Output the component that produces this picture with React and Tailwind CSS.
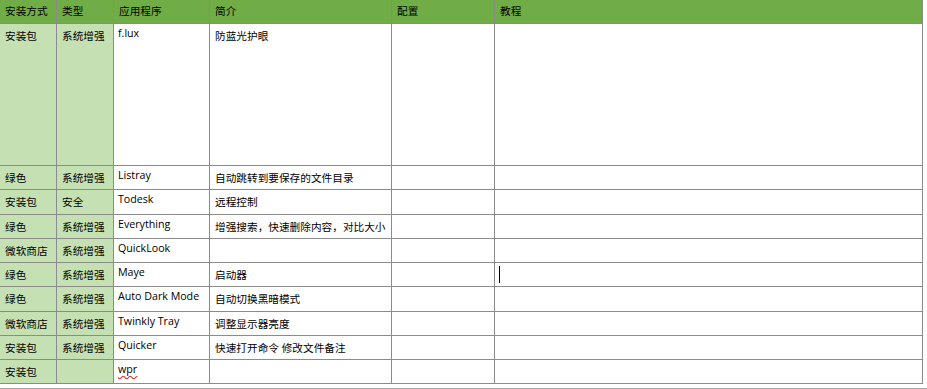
import React from "react";

const rows = [
  { h: "h-[141px]", install: "安装包", type: "系统增强", app: "f.lux", desc: "防蓝光护眼" },
  { h: "h-[23px]", install: "绿色", type: "系统增强", app: "Listray", desc: "自动跳转到要保存的文件目录" },
  { h: "h-[24px]", install: "安装包", type: "安全", app: "Todesk", desc: "远程控制" },
  { h: "h-[23px]", install: "绿色", type: "系统增强", app: "Everything", desc: "增强搜索，快速删除内容，对比大小" },
  { h: "h-[23px]", install: "微软商店", type: "系统增强", app: "QuickLook", desc: "" },
  { h: "h-[23px]", install: "绿色", type: "系统增强", app: "Maye", desc: "启动器", caret: true },
  { h: "h-[24px]", install: "绿色", type: "系统增强", app: "Auto Dark Mode", desc: "自动切换黑暗模式" },
  { h: "h-[23px]", install: "微软商店", type: "系统增强", app: "Twinkly Tray", desc: "调整显示器亮度" },
  { h: "h-[23px]", install: "安装包", type: "系统增强", app: "Quicker", desc: "快速打开命令 修改文件备注" },
  { h: "h-[23px]", install: "安装包", type: "", app: "wpr", desc: "", typo: true },
];

const headers = ["安装方式", "类型", "应用程序", "简介", "配置", "教程"];

const App = () => {
  return (
    <div className="w-[927px] h-[389px] bg-white font-['Open_Sans','Noto_Sans_CJK_SC',sans-serif] text-[10.67px] leading-[16px] text-black overflow-hidden">
      <div className="grid grid-cols-[56px_56px_95px_181px_102px_427px] gap-px bg-[#8b8b8b] w-[923px] pr-px pb-px">
        {headers.map((title) => (
          <div key={title} className="h-[23px] bg-[#70ad47] px-[5px] pt-[3px]">
            {title}
          </div>
        ))}

        {rows.map((row, i) => (
          <React.Fragment key={i}>
            <div className={`${row.h} bg-[#c5e0b3] px-[5px] pt-[4px]`}>{row.install}</div>
            <div className={`${row.h} bg-[#c5e0b3] px-[5px] pt-[4px]`}>{row.type}</div>
            <div className={`${row.h} bg-white px-[4px] pt-px`}>
              {row.typo ? (
                <span className="underline decoration-wavy decoration-[#e02020] underline-offset-2">{row.app}</span>
              ) : (
                row.app
              )}
            </div>
            <div className={`${row.h} bg-white px-[5px] pt-[4px]`}>{row.desc}</div>
            <div className={`${row.h} bg-white`}></div>
            <div className={`${row.h} bg-white pl-[4px] pt-[3px]`}>
              {row.caret && <div className="w-px h-[17px] bg-black"></div>}
            </div>
          </React.Fragment>
        ))}
      </div>
      <div className="mt-[4px] h-px bg-[#a6a6a6]"></div>
    </div>
  );
};

export default App;
